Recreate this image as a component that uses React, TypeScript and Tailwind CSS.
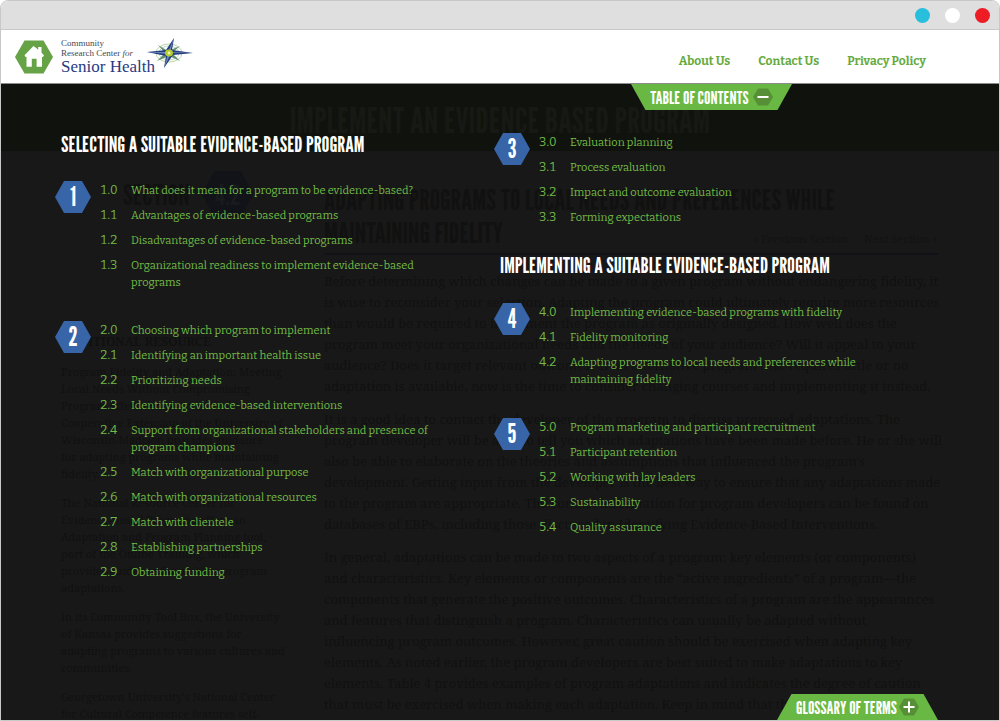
import React, { useState } from "react";

type Entry = { id: string; title: string };

const sections: Record<string, Entry[]> = {
  "1": [
    { id: "1.0", title: "What does it mean for a program to be evidence-based?" },
    { id: "1.1", title: "Advantages of evidence-based programs" },
    { id: "1.2", title: "Disadvantages of evidence-based programs" },
    { id: "1.3", title: "Organizational readiness to implement evidence-based programs" },
  ],
  "2": [
    { id: "2.0", title: "Choosing which program to implement" },
    { id: "2.1", title: "Identifying an important health issue" },
    { id: "2.2", title: "Prioritizing needs" },
    { id: "2.3", title: "Identifying evidence-based interventions" },
    { id: "2.4", title: "Support from organizational stakeholders and presence of program champions" },
    { id: "2.5", title: "Match with organizational purpose" },
    { id: "2.6", title: "Match with organizational resources" },
    { id: "2.7", title: "Match with clientele" },
    { id: "2.8", title: "Establishing partnerships" },
    { id: "2.9", title: "Obtaining funding" },
  ],
  "3": [
    { id: "3.0", title: "Evaluation planning" },
    { id: "3.1", title: "Process evaluation" },
    { id: "3.2", title: "Impact and outcome evaluation" },
    { id: "3.3", title: "Forming expectations" },
  ],
  "4": [
    { id: "4.0", title: "Implementing evidence-based programs with fidelity" },
    { id: "4.1", title: "Fidelity monitoring" },
    { id: "4.2", title: "Adapting programs to local needs and preferences while maintaining fidelity" },
  ],
  "5": [
    { id: "5.0", title: "Program marketing and participant recruitment" },
    { id: "5.1", title: "Participant retention" },
    { id: "5.2", title: "Working with lay leaders" },
    { id: "5.3", title: "Sustainability" },
    { id: "5.4", title: "Quality assurance" },
  ],
};

function Lines({ lines }: { lines: string[] }) {
  return (
    <p className="whitespace-nowrap">
      {lines.map((line) => (
        <React.Fragment key={line}>
          {line}
          <br />
        </React.Fragment>
      ))}
    </p>
  );
}

function Section({ number, className }: { number: string; className: string }) {
  return (
    <section className={`flex items-start pr-12 ${className}`}>
      <span className="-ml-1.5 flex h-8 w-9 shrink-0 items-center justify-center bg-[#3865a8] font-['League_Gothic','Open_Sans_Condensed',sans-serif] text-[26px] leading-8 text-white [clip-path:polygon(25%_0,75%_0,100%_50%,75%_100%,25%_100%,0_50%)]">
        {number}
      </span>
      <ul className="ml-[9px] flex flex-col gap-2 pt-px font-['Bitter','Liberation_Serif',serif] text-[11px] leading-[17px] text-[#74bd47]">
        {sections[number].map((entry) => (
          <li key={entry.id}>
            <a href={`#${entry.id}`} className="flex hover:underline">
              <span className="w-[31px] shrink-0 text-[12px] tabular-nums">{entry.id}</span>
              <span>{entry.title}</span>
            </a>
          </li>
        ))}
      </ul>
    </section>
  );
}

function Heading({ children, className }: { children: string; className: string }) {
  return (
    <h2 className={`whitespace-nowrap font-['League_Gothic','Open_Sans_Condensed',sans-serif] text-[22px] leading-6 text-white ${className}`}>
      {children}
    </h2>
  );
}

function ToggleIcon({ open }: { open: boolean }) {
  return (
    <svg viewBox="0 0 20 18" className="h-[18px] w-5 shrink-0" aria-hidden="true">
      <path d="M5 0.5h10l5 8.5-5 8.5H5L0 9z" fill="#568f36" />
      <path d={open ? "M4.500 9h11" : "M4.500 9h11M10 3.500v11"} stroke="#fff" strokeWidth="2" />
    </svg>
  );
}

function Logo() {
  return (
    <a href="#home" aria-label="Community Research Center for Senior Health" className="flex items-center">
      <svg viewBox="0 0 38 34" className="h-[34px] w-[38px]" aria-hidden="true">
        <path d="M9.500 0.500h19L38 17l-9.500 16.500h-19L0 17z" fill="#66a347" />
        <path d="M18.500 6 9.500 15.300l1 1.700h1v9.700h5.300v-8h4.800v8H27V17h1l1-1.700-2.500-2.600V7h-3.300v2.800l-1.700-1.600z" fill="#fff" />
      </svg>
      <span className="ml-2 flex flex-col whitespace-nowrap text-[#444a55]">
        <span className="text-[9px] leading-[10px]">Community</span>
        <span className="text-[9px] leading-[10px]">
          Research Center <i>for</i>
        </span>
        <span className="text-[17px] leading-[18px] text-[#283b82]">Senior Health</span>
      </span>
      <svg viewBox="0 0 46 30" className="-ml-2 -mt-2 h-[30px] w-[46px]" aria-hidden="true">
        <ellipse cx="22" cy="15" rx="13" ry="9" fill="none" stroke="#a5c98b" strokeWidth="0.8" />
        <ellipse cx="22" cy="15" rx="10" ry="7" fill="none" stroke="#9cb9ad" strokeWidth="0.6" />
        <path d="M11 7l10 6 12-5-8 7 8 8-11-5-12 5 8-8z" fill="#5f8f6c" />
        <path d="M27 0l-2 12 21 3-20 2-9 13 2-12L0 14l19-2z" fill="#243c80" />
        <path d="M27 0l-4 14 23 1-22 0-7 15 4-14L0 14l21 0z" fill="#6d88b4" />
        <ellipse cx="22" cy="15" rx="4" ry="3.400" fill="#b3cc28" />
        <circle cx="22" cy="15" r="1.400" fill="#eff3bb" />
      </svg>
    </a>
  );
}

function Article() {
  return (
    <div className="font-['Noto_Serif','Liberation_Serif',serif] text-[#111111]">
      <div className="flex h-[67px] items-center justify-center bg-[#10130d] pt-1 font-['League_Gothic','Open_Sans_Condensed',sans-serif] text-[36px] text-[#161914]">
        <h1 className="whitespace-nowrap">IMPLEMENT AN EVIDENCE BASED PROGRAM</h1>
      </div>
      <div className="flex pl-[60px] pr-[61px]">
        <aside className="w-[263px] shrink-0 text-[11px] leading-[17px]">
          <div className="ml-[62px] mt-5 flex items-center gap-3 font-['League_Gothic','Open_Sans_Condensed',sans-serif] text-[29px]">
            <span>SECTION</span>
            <span className="flex h-[46px] w-[52px] items-center justify-center bg-[#111318] text-[#181a1d] [clip-path:polygon(25%_0,75%_0,100%_50%,75%_100%,25%_100%,0_50%)]">
              4.2
            </span>
          </div>
          <h3 className="mb-[13px] mt-[116px] whitespace-nowrap text-[12px] font-bold">ADDITIONAL RESOURCE</h3>
          <div className="flex flex-col gap-3">
            <Lines
              lines={[
                "Program Fidelity and Adaptation: Meeting",
                "Local Needs Without Compromising",
                "Program Effectiveness from the",
                "Cooperative Extension of the University of",
                "Wisconsin-Madison provides guidance",
                "for adapting programs while maintaining",
                "fidelity.",
              ]}
            />
            <Lines
              lines={[
                "The National Resource Center for",
                "Evidence-Based Programs offers an",
                "Adaptation and Program Planning tool,",
                "part of the Online Training, which",
                "provides guidance for making program",
                "adaptations.",
              ]}
            />
            <Lines
              lines={[
                "In its Community Tool Box, the University",
                "of Kansas provides suggestions for",
                "adapting programs to various cultures and",
                "communities.",
              ]}
            />
            <Lines lines={["Georgetown University's National Center", "for Cultural Competence features self-"]} />
          </div>
        </aside>
        <article className="min-w-0 flex-1 text-[13px] leading-[21px]">
          <div className="relative mt-8 border-b-2 border-[#111218] pb-1">
            <h2 className="whitespace-nowrap font-['League_Gothic','Open_Sans_Condensed',sans-serif] text-[29px] leading-[33px]">
              ADAPTING PROGRAMS TO LOCAL NEEDS AND PREFERENCES WHILE
              <br />
              MAINTAINING FIDELITY
            </h2>
            <div className="absolute bottom-1 right-0 flex gap-4 text-[11px] text-[#131313]">
              <a href="#previous">« Previous Section</a>
              <a href="#next">Next Section »</a>
            </div>
          </div>
          <div className="mt-4 flex flex-col gap-3">
            <Lines
              lines={[
                "Before determining which changes can be made to a given program without endangering fidelity, it",
                "is wise to reconsider your selection.  Adapting the program could ultimately require more resources",
                "than would be required to implement the program as originally designed.  How well does the",
                "program meet your organizational needs and the needs of your audience? Will it appeal to your",
                "audience? Does it target relevant outcomes? If an alternative program that requires little or no",
                "adaptation is available, now is the time to consider changing courses and implementing it instead.",
              ]}
            />
            <Lines
              lines={[
                "It is a good idea to contact the developer of the program to discuss proposed adaptations.  The",
                "program developer will be able to tell you which adaptations have been made before.  He or she will",
                "also be able to elaborate on the theories and assumptions that influenced the program's",
                "development.  Getting input from the developer is the best way to ensure that any adaptations made",
                "to the program are appropriate.  The contact information for program developers can be found on",
                "databases of EBPs, including those discussed in Identifying Evidence-Based Interventions.",
              ]}
            />
            <Lines
              lines={[
                "In general, adaptations can be made to two aspects of a program:  key elements (or components)",
                "and characteristics.  Key elements or components are the “active ingredients” of a program—the",
                "components that generate the positive outcomes.  Characteristics of a program are the appearances",
                "and features that distinguish a program.  Characteristics can usually be adapted without",
                "influencing program outcomes.  However, great caution should be exercised when adapting key",
                "elements.  As noted earlier, the program developers are best suited to make adaptations to key",
                "elements.  Table 4 provides examples of program adaptations and indicates the degree of caution",
                "that must be exercised when making each adaptation.  Keep in mind that these",
              ]}
            />
          </div>
        </article>
      </div>
    </div>
  );
}

export default function App() {
  const [open, setOpen] = useState(true);
  return (
    <div className="flex h-screen flex-col overflow-hidden rounded-t-lg border border-[#c8c8c8] bg-white font-['Liberation_Serif',serif]">
      <div className="flex h-[29px] shrink-0 items-center justify-end gap-[15px] border-b border-[#c8c8c8] bg-[#dfdfdf] pr-[9px]">
        <button aria-label="Minimize" className="size-[15px] rounded-full bg-[#28bfdc]" />
        <button aria-label="Maximize" className="size-[15px] rounded-full bg-white" />
        <button aria-label="Close" className="size-[15px] rounded-full bg-[#ee1c25]" />
      </div>
      <header className="flex h-[54px] shrink-0 items-center justify-between border-b border-[#8c8c8c] pl-[14px] pr-[73px]">
        <Logo />
        <nav className="flex gap-7 pt-2 font-['Bitter','Liberation_Serif',serif] text-[12px] font-bold leading-5 text-[#66ab40]">
          <a href="#about">About Us</a>
          <a href="#contact">Contact Us</a>
          <a href="#privacy">Privacy Policy</a>
        </nav>
      </header>
      <main className="relative min-h-0 flex-1 overflow-hidden bg-[#181818]">
        <Article />
        {open && (
          <div className="absolute inset-0 grid grid-cols-2 px-[60px] pt-12">
            <div>
              <Heading className="">SELECTING A SUITABLE EVIDENCE-BASED PROGRAM</Heading>
              <Section number="1" className="mt-[25px]" />
              <Section number="2" className="mt-[30px]" />
            </div>
            <div>
              <Section number="3" className="mt-px" />
              <Heading className="mt-[27px]">IMPLEMENTING A SUITABLE EVIDENCE-BASED PROGRAM</Heading>
              <Section number="4" className="mt-[26px]" />
              <Section number="5" className="mt-[30px]" />
            </div>
          </div>
        )}
        <button
          onClick={() => setOpen(!open)}
          className="absolute right-[207px] top-0 flex h-[26px] w-[161px] items-center justify-center gap-1 whitespace-nowrap bg-[#69b843] font-['League_Gothic','Open_Sans_Condensed',sans-serif] text-[18px] text-white [clip-path:polygon(0_0,100%_0,91%_100%,9%_100%)]"
        >
          TABLE OF CONTENTS
          <ToggleIcon open={open} />
        </button>
        <button className="absolute bottom-0 right-[61px] flex h-[26px] w-[161px] items-center justify-center gap-0.5 whitespace-nowrap bg-[#69b843] font-['League_Gothic','Open_Sans_Condensed',sans-serif] text-[18px] text-white [clip-path:polygon(9%_0,91%_0,100%_100%,0_100%)]">
          GLOSSARY OF TERMS
          <ToggleIcon open={false} />
        </button>
      </main>
    </div>
  );
}
